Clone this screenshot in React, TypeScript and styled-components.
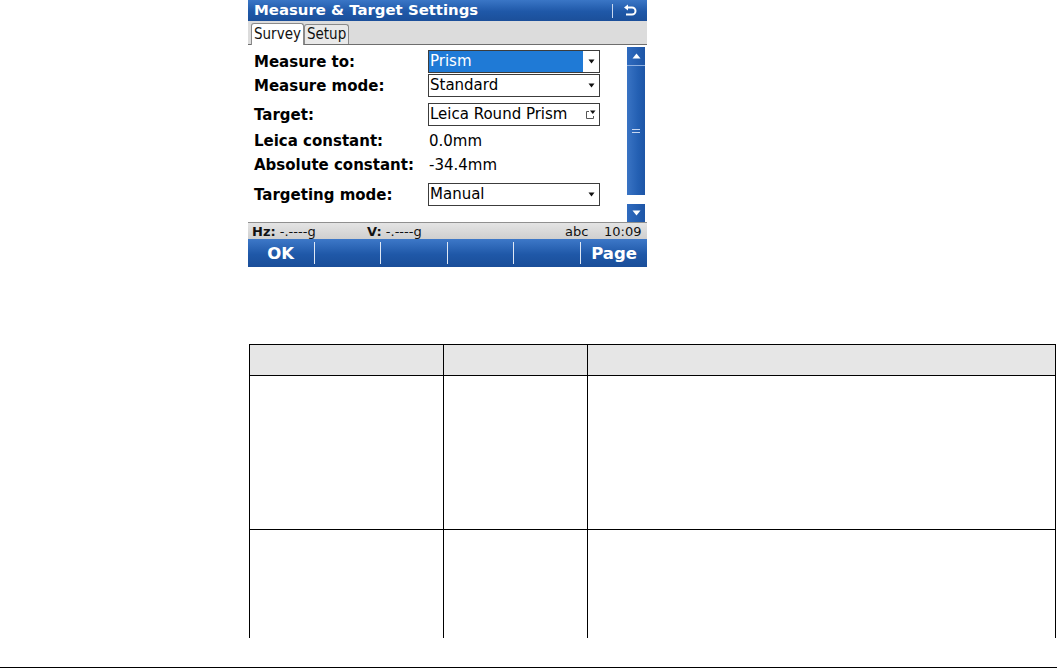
import React from "react";
import styled, { createGlobalStyle } from "styled-components";

const GlobalStyle = createGlobalStyle`
  html, body {
    margin: 0;
    padding: 0;
    background: #ffffff;
  }
  body {
    font-family: "DejaVu Sans", sans-serif;
    width: 1057px;
    height: 668px;
    overflow: hidden;
  }
`;

interface Row {
  label: string;
  value: string;
  kind: "select" | "picker" | "text";
  highlight?: boolean;
  gap: number;
}

const rows: Row[] = [
  { label: "Measure to:", value: "Prism", kind: "select", highlight: true, gap: 1 },
  { label: "Measure mode:", value: "Standard", kind: "select", gap: 6 },
  { label: "Target:", value: "Leica Round Prism", kind: "picker", gap: 3 },
  { label: "Leica constant:", value: "0.0mm", kind: "text", gap: 1 },
  { label: "Absolute constant:", value: "-34.4mm", kind: "text", gap: 7 },
  { label: "Targeting mode:", value: "Manual", kind: "select", gap: 0 },
];

const softkeys = ["OK", "", "", "", "", "Page"];

const SelectArrow = () => (
  <svg width="7" height="5" viewBox="0 0 7 5">
    <path d="M0.5 0.5 L6.5 0.5 L3.5 4.5 Z" fill="#111" />
  </svg>
);

const PickerIcon = () => (
  <svg width="10" height="9" viewBox="0 0 10 9">
    <path d="M0.5 1.5 V8.5 H7.5" fill="none" stroke="#555" strokeWidth="1" />
    <path d="M0.5 1.5 H3" fill="none" stroke="#555" strokeWidth="1" />
    <path d="M4 0.5 H9.5 L6.8 4 Z" fill="#111" />
    <path d="M7.5 6 V8.5" fill="none" stroke="#555" strokeWidth="1" />
  </svg>
);

const BackIcon = () => (
  <svg width="14" height="14" viewBox="0 0 14 14">
    <path
      d="M4 3.5 H9 A3.5 3.5 0 0 1 9 10.5 H3"
      fill="none"
      stroke="#ffffff"
      strokeWidth="2"
    />
    <path d="M1 3.5 L5 0.5 L5 6.5 Z" fill="#ffffff" />
  </svg>
);

const ArrowGlyph = ({ up }: { up?: boolean }) => (
  <svg width="9" height="6" viewBox="0 0 9 6">
    <path d={up ? "M0.5 5.5 L8.5 5.5 L4.5 0.5 Z" : "M0.5 0.5 L8.5 0.5 L4.5 5.5 Z"} fill="#ffffff" />
  </svg>
);

export default function App() {
  return (
    <>
      <GlobalStyle />
      <Page>
        <Screen>
          <TitleBar>
            <Title>Measure &amp; Target Settings</Title>
            <TitleSep />
            <BackButton>
              <BackIcon />
            </BackButton>
          </TitleBar>
          <TabStrip>
            <Tab active>Survey</Tab>
            <Tab>Setup</Tab>
          </TabStrip>
          <Body>
            <Form>
              {rows.map((row) => (
                <FormRow key={row.label} gap={row.gap}>
                  <Label>{row.label}</Label>
                  {row.kind === "text" ? (
                    <Value>{row.value}</Value>
                  ) : (
                    <Field>
                      <FieldText highlight={row.highlight}>{row.value}</FieldText>
                      <FieldIcon>
                        {row.kind === "picker" ? <PickerIcon /> : <SelectArrow />}
                      </FieldIcon>
                    </Field>
                  )}
                </FormRow>
              ))}
            </Form>
            <ScrollBar>
              <ScrollButton>
                <ArrowGlyph up />
              </ScrollButton>
              <Thumb>
                <Grip />
                <Grip />
              </Thumb>
              <Track />
              <ScrollButton>
                <ArrowGlyph />
              </ScrollButton>
            </ScrollBar>
          </Body>
          <StatusBar>
            <StatusItem width={115}>
              <b>Hz:</b> -.----g
            </StatusItem>
            <StatusItem width={198}>
              <b>V:</b> -.----g
            </StatusItem>
            <StatusItem width={39}>abc</StatusItem>
            <StatusItem>10:09</StatusItem>
          </StatusBar>
          <SoftKeys>
            {softkeys.map((k, i) => (
              <SoftKey key={i} last={i === softkeys.length - 1}>
                {k}
              </SoftKey>
            ))}
          </SoftKeys>
        </Screen>

        <Table>
          <thead>
            <tr>
              <HeadCell colWidth={193} />
              <HeadCell colWidth={143} />
              <HeadCell />
            </tr>
          </thead>
          <tbody>
            <tr>
              <Cell rowHeight={153} />
              <Cell rowHeight={153} />
              <Cell rowHeight={153} />
            </tr>
            <tr>
              <OpenCell rowHeight={108} />
              <OpenCell rowHeight={108} />
              <OpenCell rowHeight={108} />
            </tr>
          </tbody>
        </Table>
        <FooterRule />
      </Page>
    </>
  );
}

const Page = styled.div`
  display: flex;
  flex-direction: column;
  width: 1057px;
  height: 668px;
`;

const Screen = styled.div`
  margin-left: 248px;
  width: 399px;
  height: 267px;
  display: flex;
  flex-direction: column;
  background: #ffffff;
`;

const TitleBar = styled.div`
  height: 21px;
  display: flex;
  align-items: center;
  background: linear-gradient(#3a76c6, #1f58a8 55%, #1b4f9a);
  color: #ffffff;
  padding-left: 6px;
`;

const Title = styled.div`
  flex: 1;
  font-weight: bold;
  font-size: 14.9px;
  line-height: 21px;
`;

const TitleSep = styled.div`
  width: 1px;
  height: 14px;
  background: #c9d8ef;
  margin-right: 10px;
`;

const BackButton = styled.div`
  width: 24px;
  display: flex;
  align-items: center;
  justify-content: flex-start;
`;

const TabStrip = styled.div`
  height: 24px;
  display: flex;
  align-items: flex-end;
  background: #dcdcdc;
  padding-left: 3px;
  border-bottom: 1px solid #6e6e6e;
  box-sizing: border-box;
  font-family: "DejaVu Sans Condensed", "DejaVu Sans", sans-serif;
`;

const Tab = styled.div<{ active?: boolean }>`
  height: ${(p) => (p.active ? 21 : 19)}px;
  line-height: ${(p) => (p.active ? 21 : 19)}px;
  padding: 0 2px;
  font-size: 15px;
  color: #111;
  background: ${(p) => (p.active ? "#ffffff" : "#e9e9e9")};
  border: 1px solid #8a8a8a;
  border-bottom: none;
  border-radius: 3px 3px 0 0;
  margin-bottom: ${(p) => (p.active ? -1 : 0)}px;
`;

const Body = styled.div`
  flex: 1;
  display: flex;
  background: #ffffff;
`;

const Form = styled.div`
  flex: 1;
  display: flex;
  flex-direction: column;
  padding: 5px 0 0 6px;
`;

const FormRow = styled.div<{ gap: number }>`
  display: flex;
  align-items: center;
  height: 23px;
  margin-bottom: ${(p) => p.gap}px;
`;

const Label = styled.div`
  width: 174px;
  font-weight: bold;
  font-size: 15px;
  color: #000;
`;

const Value = styled.div`
  padding-left: 1px;
  font-size: 15px;
  color: #000;
`;

const Field = styled.div`
  width: 172px;
  height: 23px;
  box-sizing: border-box;
  border: 1px solid #3c3c3c;
  display: flex;
  align-items: stretch;
  background: #ffffff;
`;

const FieldText = styled.div<{ highlight?: boolean }>`
  flex: 1;
  font-size: 15px;
  line-height: 21px;
  padding-left: 1px;
  color: ${(p) => (p.highlight ? "#ffffff" : "#000")};
  background: ${(p) => (p.highlight ? "#1f7ad6" : "transparent")};
`;

const FieldIcon = styled.div`
  width: 16px;
  display: flex;
  align-items: center;
  justify-content: center;
`;

const ScrollBar = styled.div`
  width: 18px;
  margin: 2px 2px 0 0;
  display: flex;
  flex-direction: column;
`;

const ScrollButton = styled.div`
  height: 18px;
  display: flex;
  align-items: center;
  justify-content: center;
  background: linear-gradient(90deg, #2f6bbf, #1d55a6);
`;

const Thumb = styled.div`
  flex: 1;
  display: flex;
  flex-direction: column;
  align-items: center;
  justify-content: center;
  gap: 2px;
  background: linear-gradient(90deg, #3a74c4, #2460b3 60%, #1d55a6);
  border-top: 1px solid #8fb0e0;
`;

const Grip = styled.div`
  width: 8px;
  height: 1px;
  background: #c7d7f0;
`;

const Track = styled.div`
  height: 9px;
  background: #ffffff;
`;

const StatusBar = styled.div`
  height: 16px;
  display: flex;
  align-items: center;
  padding: 0 4px;
  background: linear-gradient(#e4e4e4, #cfcfcf);
  border-top: 1px solid #909090;
  font-size: 13px;
  color: #111;
`;

const StatusItem = styled.div<{ width?: number }>`
  width: ${(p) => (p.width ? `${p.width}px` : "auto")};
  white-space: nowrap;
  b {
    font-weight: bold;
  }
`;

const SoftKeys = styled.div`
  height: 28px;
  display: grid;
  grid-template-columns: repeat(6, 1fr);
  background: linear-gradient(#3d78c8, #1f58a8 55%, #1a4e99);
`;

const SoftKey = styled.div<{ last?: boolean }>`
  display: flex;
  align-items: center;
  justify-content: ${(p) => (p.last ? "flex-end" : "center")};
  padding-right: ${(p) => (p.last ? 10 : 0)}px;
  color: #ffffff;
  font-weight: bold;
  font-size: 16.5px;
  border-right: ${(p) => (p.last ? "none" : "1px solid #dfe8f5")};
  margin: 3px 0;
`;

const Table = styled.table`
  margin: 77px 0 0 249px;
  width: 807px;
  border-collapse: collapse;
  table-layout: fixed;
`;

const HeadCell = styled.th<{ colWidth?: number }>`
  width: ${(p) => (p.colWidth ? `${p.colWidth}px` : "auto")};
  height: 30px;
  padding: 0;
  background: #e6e6e6;
  border: 1px solid #000;
`;

const Cell = styled.td<{ rowHeight: number }>`
  height: ${(p) => p.rowHeight}px;
  padding: 0;
  border: 1px solid #000;
`;

const OpenCell = styled(Cell)`
  border-bottom: none;
`;

const FooterRule = styled.div`
  margin-top: 29px;
  height: 1px;
  background: #000;
  width: 1057px;
`;
